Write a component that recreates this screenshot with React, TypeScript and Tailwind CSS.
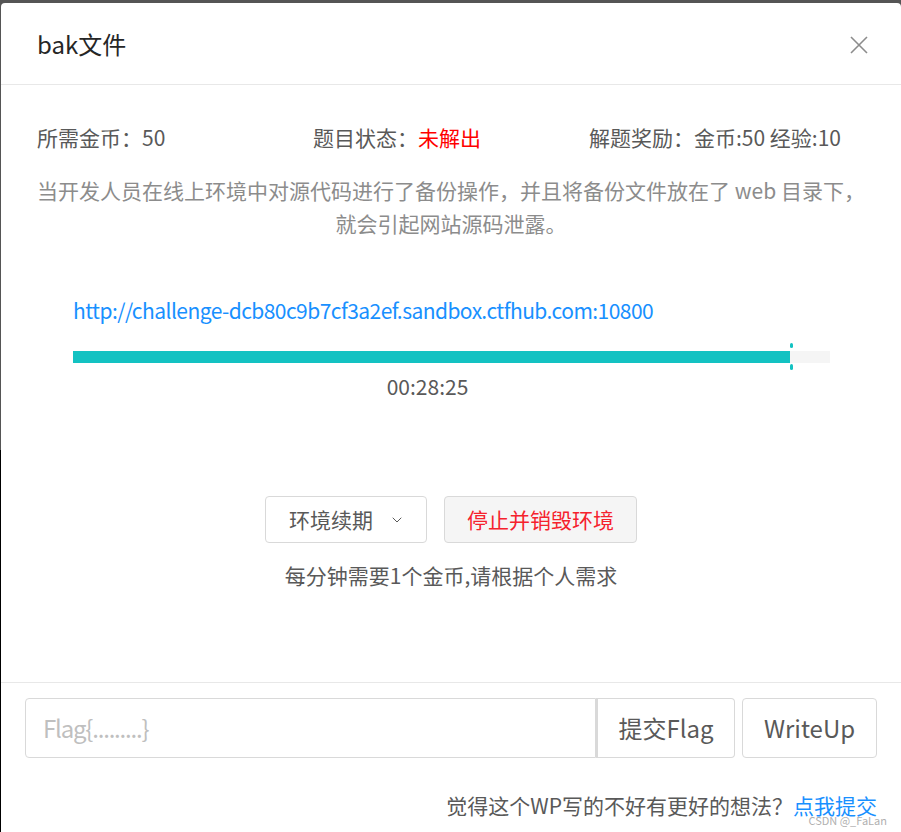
import { ChevronDown } from "lucide-react";

const font = "font-['Noto_Sans_CJK_SC','Noto_Sans',sans-serif]";

export default function App() {
  const percent = 94.7;

  return (
    <div
      className={`min-h-screen bg-[linear-gradient(to_bottom,#555_450px,#000_450px)] pt-[3px] pl-px ${font}`}
    >
      <div className="relative h-[829px] overflow-hidden rounded-t-[4px] bg-white">
        {/* header */}
        <div className="flex h-[82px] items-center border-b border-[#e8e8e8] px-[36px]">
          <h1 className="text-[24px] leading-[33px] text-[#262626]">bak文件</h1>
          <button className="absolute right-0 top-0 flex h-[84px] w-[84px] items-center justify-center text-[#8c8c8c]">
            <svg width="20" height="20" viewBox="0 0 20 20" fill="none" stroke="currentColor" strokeWidth="1.6">
              <path d="M2 2 L18 18 M18 2 L2 18" />
            </svg>
          </button>
        </div>

        {/* body */}
        <div className="px-[36px] pt-[36px] text-[21px] leading-[33px]">
          <div className="grid grid-cols-3 text-[#595959]">
            <p>所需金币：50</p>
            <p>
              题目状态：<span className="text-[#ff0000]">未解出</span>
            </p>
            <p>解题奖励：金币:50 经验:10</p>
          </div>

          <p className="mt-[20px] whitespace-nowrap text-center text-[#8c8c8c]">
            当开发人员在线上环境中对源代码进行了备份操作，并且将备份文件放在了 web 目录下，
            <br />
            就会引起网站源码泄露。
          </p>

          <div className="mt-[54px] pl-[36px] pr-[35px]">
            <a className="tracking-[-0.55px] text-[#1890ff]">
              http://challenge-dcb80c9b7cf3a2ef.sandbox.ctfhub.com:10800
            </a>
            <div className="relative mt-[24px] h-[12px] bg-[#f5f5f5]">
              <div className="h-full bg-[#13c2c2]" style={{ width: `${percent}%` }} />
              <span
                className="absolute top-[-8px] h-[5px] w-[3px] rounded-full bg-[#13c2c2]"
                style={{ left: `${percent}%` }}
              />
              <span
                className="absolute bottom-[-7px] h-[6px] w-[3px] rounded-full bg-[#13c2c2]"
                style={{ left: `${percent}%` }}
              />
            </div>
            <p className="mt-[7px] pr-[48px] text-center text-[#595959]">00:28:25</p>
          </div>

          <div className="mt-[93px] flex justify-center gap-[17px]">
            <button className="flex h-[47px] items-center rounded-[4px] border border-[#d9d9d9] bg-white pl-[23px] pr-[21px] text-[#595959]">
              环境续期
              <ChevronDown className="ml-[16px] h-[16px] w-[16px] text-[#595959]" strokeWidth={1.5} />
            </button>
            <button className="h-[47px] rounded-[4px] border border-[#d9d9d9] bg-[#f5f5f5] px-[22px] text-[#f5222d]">
              停止并销毁环境
            </button>
          </div>

          <p className="mt-[16px] text-center text-[#595959]">每分钟需要1个金币,请根据个人需求</p>
        </div>

        {/* footer */}
        <div className="mt-[90px] border-t border-[#e8e8e8] px-[24px] pt-[15px]">
          <div className="flex h-[60px]">
            <input
              placeholder="Flag{.........}"
              className="min-w-0 flex-1 rounded-l-[4px] border border-[#d9d9d9] px-[17px] text-[24px] tracking-[-1.2px] text-[#595959] outline-none placeholder:text-[#bfbfbf]"
            />
            <button className="w-[139px] rounded-r-[4px] border border-l-2 border-[#d9d9d9] text-[24px] text-[#595959]">
              提交Flag
            </button>
            <button className="ml-[7px] w-[135px] rounded-[4px] border border-[#d9d9d9] text-[24px] text-[#595959]">
              WriteUp
            </button>
          </div>
          <p className="mt-[31px] text-right text-[21px] leading-[33px] text-[#595959]">
            觉得这个WP写的不好有更好的想法？<a className="text-[#1890ff]">点我提交</a>
          </p>
        </div>

        <span className="absolute bottom-[6px] right-[14px] text-[11px] leading-none text-[#b0b0b0]">
          CSDN @_FaLan
        </span>
      </div>
    </div>
  );
}
